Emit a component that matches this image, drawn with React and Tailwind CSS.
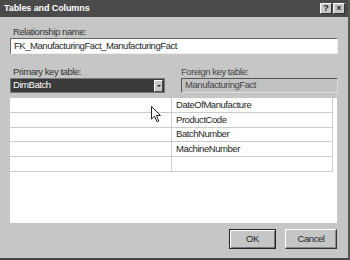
const font = { fontFamily: '"Liberation Sans", Arial, sans-serif' };

const rows = ['DateOfManufacture', 'ProductCode', 'BatchNumber', 'MachineNumber', ''];

function TitleButton({ children }) {
  return (
    <div className="w-[12px] h-[11px] bg-[#c8c8c8] border-t border-l border-t-white border-l-white border-b border-r border-b-[#333] border-r-[#333] flex items-center justify-center text-[9px] font-bold leading-none text-[#222]">
      {children}
    </div>
  );
}

function Cursor() {
  return (
    <svg className="absolute left-[141px] top-[8px]" width="11" height="17" viewBox="0 0 11 17">
      <path d="M0.5 0.5 L0.5 13 L3.5 10.2 L6 15.8 L7.8 15 L5.4 9.5 L9.5 9.5 Z" fill="#fff" stroke="#222" strokeWidth="1" />
    </svg>
  );
}

export default function App() {
  return (
    <div
      className="w-[350px] h-[260px] bg-[#c6c6c6] flex flex-col border-r-2 border-r-[#555] border-b-2 border-b-[#444] text-[#262626] overflow-hidden"
      style={font}
    >
      <div className="h-[17px] bg-[#4a4a4a] flex items-center justify-between pl-[4px] pr-[3px]">
        <span className="text-white font-bold text-[9px] tracking-[-0.1px]">Tables and Columns</span>
        <div className="flex gap-[1px]">
          <TitleButton>?</TitleButton>
          <TitleButton>×</TitleButton>
        </div>
      </div>

      <div className="flex flex-col px-[10px] pt-[9px] text-[9.5px] tracking-[-0.45px]">
        <span className="pl-[3px] h-[12px] leading-[12px] text-[#333]">Relationship name:</span>
        <div className="h-[16px] bg-white border-t border-l border-t-[#666] border-l-[#666] border-b border-r border-b-[#eee] border-r-[#eee] flex items-center pl-[3px]">
          FK_ManufacturingFact_ManufacturingFact
        </div>

        <div className="flex gap-[16px] mt-[12px]">
          <div className="flex flex-col w-[155px]">
            <span className="pl-[3px] h-[12px] leading-[12px] text-[#333]">Primary key table:</span>
            <div className="h-[15px] bg-[#3a3a3a] border border-[#777] flex items-center justify-between pl-[2px] pr-[1px]">
              <span className="text-white">DimBatch</span>
              <div className="w-[9px] h-[12px] bg-[#c8c8c8] border-t border-l border-t-white border-l-white border-b border-r border-b-[#444] border-r-[#444] flex items-center justify-center">
                <div className="w-0 h-0 border-l-[2px] border-r-[2px] border-t-[2px] border-l-transparent border-r-transparent border-t-[#222]" />
              </div>
            </div>
          </div>
          <div className="flex flex-col flex-1">
            <span className="h-[12px] leading-[12px] text-[#444]">Foreign key table:</span>
            <div className="h-[15px] bg-[#c2c2c2] border-t border-l border-t-[#555] border-l-[#555] border-b border-r border-b-[#ddd] border-r-[#ddd] flex items-center pl-[3px] text-[#444]">
              ManufacturingFact
            </div>
          </div>
        </div>

        <div className="relative mt-[5px] h-[125px] bg-white w-[327px]">
          <div className="flex flex-col border-r border-r-[#ccc] w-[323px]">
            {rows.map((r, i) => (
              <div key={i} className="flex h-[14.8px] border-b border-b-[#ccc]">
                <div className="w-[162px] border-r border-r-[#ccc]" />
                <div className="flex-1 pl-[4px] flex items-center">{r}</div>
              </div>
            ))}
          </div>
          <Cursor />
        </div>

        <div className="flex justify-end gap-[9px] mt-[6px] pr-[1px]">
          <div className="w-[47px] h-[20px] flex items-center justify-center border border-[#222] shadow-[inset_1px_1px_0_#fff,inset_-1px_-1px_0_#777]">
            OK
          </div>
          <div className="w-[52px] h-[20px] flex items-center justify-center border-t border-l border-t-white border-l-white border-b border-r border-b-[#333] border-r-[#333] shadow-[inset_-1px_-1px_0_#888]">
            Cancel
          </div>
        </div>
      </div>
    </div>
  );
}
